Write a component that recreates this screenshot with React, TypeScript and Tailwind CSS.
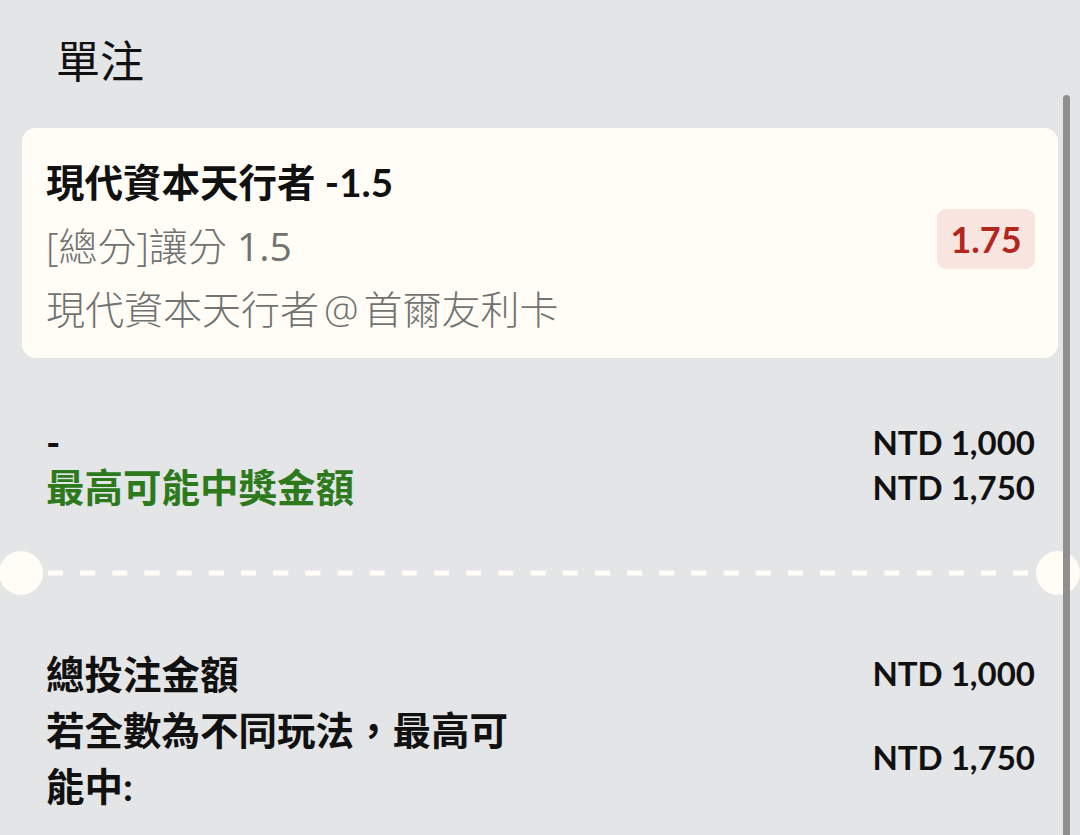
import React from "react";

export default function App() {
  return (
    <div className="relative h-[835px] w-[1080px] overflow-hidden bg-[#e4e5e7] font-['Lato','Noto_Sans_CJK_TC',sans-serif] text-[#111111]">
      <div className="px-[22px]">
        <h1 className="pl-[34px] pt-[31px] text-[44px] font-normal leading-[56px] font-['Noto_Sans_CJK_TC',sans-serif]">
          單注
        </h1>

        <div className="mt-[41px] flex h-[230px] items-start justify-between rounded-[14px] bg-[#fffdf6] pl-[24px] pr-[23px] pt-[23px]">
          <div className="flex flex-col leading-[63px]">
            <div className="text-[38.5px] font-bold">現代資本天行者 -1.5</div>
            <div className="font-['Open_Sans','Noto_Sans_CJK_TC',sans-serif] text-[39px] font-light text-[#727272]">
              [總分]讓分 <span className="font-normal">1.5</span>
            </div>
            <div className="font-['Open_Sans','Noto_Sans_CJK_TC',sans-serif] text-[39px] font-light text-[#727272]">
              現代資本天行者<span className="mx-[5px]">@</span>首爾友利卡
            </div>
          </div>
          <div className="mt-[58px] flex h-[60px] w-[98px] items-center justify-center rounded-[9px] bg-[#f8e5df] text-[36px] font-bold text-[#b3261e]">
            1.75
          </div>
        </div>

        <div className="mt-[62px] pl-[24px] pr-[23px]">
          <div className="flex h-[45px] items-center justify-between">
            <div className="text-[38.5px] font-bold">-</div>
            <div className="text-[33px] font-bold">NTD 1,000</div>
          </div>
          <div className="flex h-[45px] items-center justify-between">
            <div className="text-[38.5px] font-bold text-[#2d7a1d]">最高可能中獎金額</div>
            <div className="text-[33px] font-bold">NTD 1,750</div>
          </div>
        </div>

        <div className="-mx-[22px] mt-[41px] flex h-[44px] items-center">
          <div className="-ml-[1px] h-[44px] w-[44px] shrink-0 rounded-full bg-[#fffdf6]" />
          <svg className="ml-[5px] h-[6px] w-[982px] shrink-0" viewBox="0 0 982 6">
            <line x1="0" y1="3" x2="982" y2="3" stroke="#fffdf6" strokeWidth="5" strokeDasharray="15 17.17" />
          </svg>
          <div className="ml-[6px] h-[44px] w-[44px] shrink-0 rounded-full bg-[#fffdf6]" />
        </div>

        <div className="mt-[51px] pl-[24px] pr-[23px]">
          <div className="flex h-[56px] items-center justify-between">
            <div className="text-[38.5px] font-bold leading-[56px]">總投注金額</div>
            <div className="text-[33px] font-bold">NTD 1,000</div>
          </div>
          <div className="flex items-center justify-between">
            <div className="max-w-[470px] text-[38.5px] font-bold leading-[56px]">若全數為不同玩法，最高可能中:</div>
            <div className="text-[33px] font-bold">NTD 1,750</div>
          </div>
        </div>
      </div>

      <div className="absolute right-[10px] top-[95px] h-[760px] w-[7px] rounded-full bg-[#8f8f8f]" />
    </div>
  );
}
